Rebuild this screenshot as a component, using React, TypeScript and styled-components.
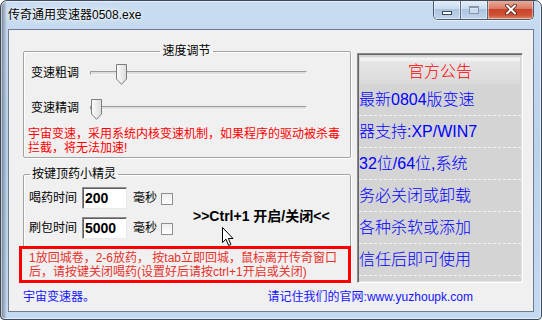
import React, { useId } from 'react'
import styled, { createGlobalStyle } from 'styled-components'

const UI_FONT = `"Liberation Sans", "Noto Sans CJK SC", sans-serif`

const GlobalStyle = createGlobalStyle`
  html, body {
    margin: 0;
    padding: 0;
    background: #fff;
  }
  body {
    font-family: ${UI_FONT};
    font-size: 12px;
    color: #000;
  }
  * {
    box-sizing: border-box;
  }
`

const Window = styled.div`
  width: 542px;
  height: 320px;
  display: flex;
  flex-direction: column;
  padding: 0 7px 7px;
  border: 1px solid #3f4a58;
  border-radius: 7px 7px 4px 4px;
  background:
    linear-gradient(to right, rgba(45, 55, 68, 0.55) 0px, rgba(45, 55, 68, 0) 6px),
    linear-gradient(to bottom, #c8dcf1 0%, #bad2ec 45%, #c4daf1 100%);
  box-shadow: inset 0 0 0 1px rgba(255, 255, 255, 0.55);
  overflow: hidden;
`

const TitleBar = styled.div`
  height: 28px;
  display: flex;
  align-items: flex-start;
`

const Title = styled.div`
  padding-top: 6px;
  font-size: 12px;
  line-height: 16px;
  text-shadow: 0 0 6px #fff, 0 0 3px #fff;
`

const Controls = styled.div`
  margin-left: auto;
  display: flex;
  height: 20px;
  margin-top: -1px;
  border: 1px solid #4c596a;
  border-top: none;
  border-radius: 0 0 5px 5px;
  overflow: hidden;
  box-shadow: 0 1px 0 rgba(255, 255, 255, 0.6);
`

const CaptionButton = styled.div<{ $kind: 'min' | 'max' | 'close' }>`
  width: ${({ $kind }) => ($kind === 'close' ? 46 : $kind === 'max' ? 27 : 26)}px;
  display: flex;
  align-items: center;
  justify-content: center;
  background: ${({ $kind }) =>
    $kind === 'close'
      ? 'linear-gradient(#eab0a1 0%, #db7b65 45%, #c8432b 50%, #cf5236 80%, #e38a6c 100%)'
      : 'linear-gradient(#e6eff9 0%, #cadcf0 45%, #adc4e0 50%, #c0d5ec 100%)'};
  box-shadow: inset 0 0 0 1px rgba(255, 255, 255, 0.45);
  & + & {
    border-left: 1px solid #5a6880;
  }
`

const MinGlyph = styled.span`
  width: 10px;
  height: 4px;
  margin-top: 6px;
  background: #fff;
  border: 1px solid #3b4656;
`

const MaxGlyph = styled.span`
  width: 10px;
  height: 8px;
  border: 1px solid #8796aa;
  border-top-width: 2px;
  background: rgba(255, 255, 255, 0.35);
`

const Client = styled.div`
  flex: 1;
  display: flex;
  flex-direction: column;
  background: #f0f0f0;
  border: 1px solid #6f7d8e;
`

const Main = styled.div`
  display: flex;
  align-items: flex-start;
  gap: 6px;
  padding: 13px 10px 0 14px;
`

const LeftColumn = styled.div`
  width: 328px;
  display: flex;
  flex-direction: column;
  gap: 8px;
`

const GroupBox = styled.fieldset<{ $pad: string }>`
  margin: 0;
  min-width: 0;
  padding: ${({ $pad }) => $pad};
  border: 1px solid #a3a3a3;
  border-radius: 2px;
  box-shadow: 1px 1px 0 #fff, inset 1px 1px 0 #fff;
`

const Legend = styled.legend<{ $center?: boolean }>`
  padding: 0 2px;
  margin: ${({ $center }) => ($center ? '0 auto' : '0 0 0 1px')};
  font-size: 12px;
  line-height: 16px;
`

const SliderList = styled.div`
  display: flex;
  flex-direction: column;
  gap: 11px;
  padding-top: 2px;
`

const SliderRow = styled.div`
  display: flex;
  align-items: center;
  height: 24px;
`

const RowLabel = styled.span`
  width: 48px;
  flex: none;
  line-height: 16px;
  white-space: nowrap;
`

const SliderBox = styled.div`
  position: relative;
  width: 217px;
  height: 24px;
  margin-left: 11px;
  display: flex;
  align-items: center;
`

const SliderTrack = styled.div`
  width: 100%;
  height: 4px;
  border: 1px solid;
  border-color: #9a9a9a #f6f6f6 #f6f6f6 #9a9a9a;
  background: #e0e0e0;
`

const Thumb = styled.svg`
  position: absolute;
  top: 3px;
`

const Warning = styled.p`
  margin: 7px 0 0 -3px;
  color: #ff0000;
  font-size: 12px;
  line-height: 14px;
  white-space: nowrap;
`

const PotionArea = styled.div`
  position: relative;
  display: flex;
  margin-top: 5px;
`

const FieldList = styled.div`
  display: flex;
  flex-direction: column;
  gap: 8px;
`

const FieldRow = styled.div`
  display: flex;
  align-items: center;
  height: 22px;
`

const NumberInput = styled.input`
  width: 45px;
  height: 22px;
  margin: 0 0 0 5px;
  padding: 0 0 0 2px;
  border: 1px solid;
  border-color: #8e8e8e #eaeaea #eaeaea #8e8e8e;
  box-shadow: inset 1px 1px 0 #5f5f5f;
  background: #fff;
  font-family: "Liberation Sans", sans-serif;
  font-size: 14px;
  font-weight: bold;
  color: #000;
  outline: none;
`

const Unit = styled.span`
  margin: 0 4px 0 6px;
  line-height: 16px;
`

const CheckBox = styled.span`
  width: 12px;
  height: 12px;
  margin-top: 2px;
  border: 1px solid #8f8f8f;
  background: linear-gradient(#ededed, #ffffff);
`

const Hotkey = styled.div`
  align-self: center;
  margin: 6px 0 0 20px;
  font-size: 14px;
  font-weight: bold;
  line-height: 18px;
  white-space: nowrap;
`

const Pointer = styled.svg`
  position: absolute;
  left: 193px;
  top: 40px;
`

const Notice = styled.div`
  position: relative;
  height: 37px;
  margin: 7px -6px -1px -10px;
  padding: 2px 0 0 7px;
  border: 3px solid #ff0000;
  background: #f0f0f0;
  color: #e8302a;
  font-size: 12px;
  line-height: 14px;
  white-space: nowrap;
`

const BoardPanel = styled.div`
  width: 166px;
  margin-top: 10px;
  padding: 3px 1px 6px;
  border: 1px solid;
  border-color: #8a8a8a #ffffff #ffffff #8a8a8a;
  box-shadow: inset 1px 1px 0 #666, inset -1px -1px 0 #e3e3e3;
  background: #d4d4d4;
`

const BoardHeader = styled.div`
  height: 27px;
  margin: 0 1px;
  padding-bottom: 2px;
  display: flex;
  align-items: center;
  justify-content: center;
  color: #ff0000;
  font-size: 16px;
  font-weight: 300;
  background: linear-gradient(#e4e4e4 0px, #f7f7f7 2px, #e6e6e6 5px, #dadada 100%);
`

const BoardRow = styled.div`
  height: 32px;
  line-height: 31px;
  border-bottom: 1px dashed #f4f4f4;
  color: #0000ff;
  font-size: 16px;
  font-weight: 300;
  white-space: nowrap;
  overflow: hidden;
`

const Footer = styled.div`
  display: flex;
  justify-content: space-between;
  padding: 6px 60px 0 14px;
  color: #1414ff;
  font-size: 12px;
  line-height: 16px;
`

const Slider = ({ value, max = 100 }: { value: number; max?: number }) => {
  const id = useId()
  const left = Math.round((value / max) * (217 - 11)) + 1
  return (
    <SliderBox>
      <SliderTrack />
      <Thumb width="11" height="21" viewBox="0 0 11 21" style={{ left }}>
        <defs>
          <linearGradient id={id} x1="0" y1="0" x2="1" y2="0">
            <stop offset="0" stopColor="#fbfbfb" />
            <stop offset="1" stopColor="#dcdcdc" />
          </linearGradient>
        </defs>
        <path d="M0.5 0.5 H10.5 V15 L5.5 20.3 L0.5 15 Z" fill={`url(#${id})`} stroke="#7d7d7d" />
      </Thumb>
    </SliderBox>
  )
}

const board = ['最新0804版变速', '器支持:XP/WIN7', '32位/64位,系统', '务必关闭或卸载', '各种杀软或添加', '信任后即可使用']

export default function App() {
  return (
    <>
      <GlobalStyle />
      <Window>
        <TitleBar>
          <Title>传奇通用变速器0508.exe</Title>
          <Controls>
            <CaptionButton $kind="min">
              <MinGlyph />
            </CaptionButton>
            <CaptionButton $kind="max">
              <MaxGlyph />
            </CaptionButton>
            <CaptionButton $kind="close">
              <svg width="12" height="11" viewBox="0 0 12 11">
                <path d="M2 1.5 L10 9.5 M10 1.5 L2 9.5" stroke="#4a1a10" strokeWidth="3.6" strokeLinecap="round" />
                <path d="M2 1.5 L10 9.5 M10 1.5 L2 9.5" stroke="#fff" strokeWidth="2" strokeLinecap="round" />
              </svg>
            </CaptionButton>
          </Controls>
        </TitleBar>
        <Client>
          <Main>
            <LeftColumn>
              <GroupBox $pad="0 8px 2px 7px">
                <Legend $center>速度调节</Legend>
                <SliderList>
                  <SliderRow>
                    <RowLabel>变速粗调</RowLabel>
                    <Slider value={12} />
                  </SliderRow>
                  <SliderRow>
                    <RowLabel>变速精调</RowLabel>
                    <Slider value={0} />
                  </SliderRow>
                </SliderList>
                <Warning>
                  宇宙变速，采用系统内核变速机制，如果程序的驱动被杀毒
                  <br />
                  拦截，将无法加速!
                </Warning>
              </GroupBox>
              <GroupBox $pad="0 5px 0 5px">
                <Legend>按键顶药小精灵</Legend>
                <PotionArea>
                  <FieldList>
                    <FieldRow>
                      <RowLabel>喝药时间</RowLabel>
                      <NumberInput defaultValue="200" readOnly />
                      <Unit>毫秒</Unit>
                      <CheckBox />
                    </FieldRow>
                    <FieldRow>
                      <RowLabel>刷包时间</RowLabel>
                      <NumberInput defaultValue="5000" readOnly />
                      <Unit>毫秒</Unit>
                      <CheckBox />
                    </FieldRow>
                  </FieldList>
                  <Hotkey>&gt;&gt;Ctrl+1 开启/关闭&lt;&lt;</Hotkey>
                  <Pointer width="13" height="20" viewBox="0 0 13 20">
                    <path d="M0.5 0.5 L0.5 15.5 L4 12.2 L6.6 18.5 L8.9 17.5 L6.4 11.5 L11 11.5 Z" fill="#fff" stroke="#000" strokeWidth="1" strokeLinejoin="round" />
                  </Pointer>
                </PotionArea>
                <Notice>
                  1放回城卷，2-6放药， 按tab立即回城，鼠标离开传奇窗口
                  <br />
                  后，请按键关闭喝药(设置好后请按ctrl+1开启或关闭)
                </Notice>
              </GroupBox>
            </LeftColumn>
            <BoardPanel>
              <BoardHeader>官方公告</BoardHeader>
              {board.map((line) => (
                <BoardRow key={line}>{line}</BoardRow>
              ))}
            </BoardPanel>
          </Main>
          <Footer>
            <span>宇宙变速器。</span>
            <span>请记住我们的官网:www.yuzhoupk.com</span>
          </Footer>
        </Client>
      </Window>
    </>
  )
}
